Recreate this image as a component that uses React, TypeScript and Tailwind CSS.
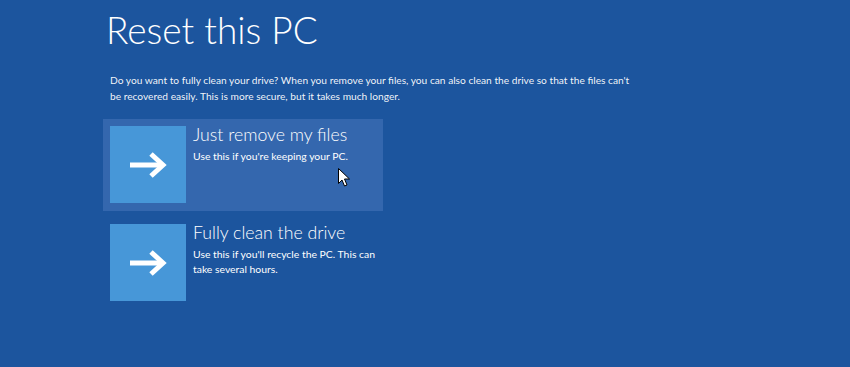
import React from 'react';

function ArrowTile() {
  return (
    <div className="w-[76px] h-[77px] bg-[#4797d8] flex items-center justify-center shrink-0">
      <svg width="40" height="28" viewBox="0 0 40 28" fill="none">
        <path d="M2 14H35" stroke="white" strokeWidth="5" />
        <path d="M23 3L35 14L23 25" stroke="white" strokeWidth="5" strokeLinejoin="miter" />
      </svg>
    </div>
  );
}

interface OptionProps {
  title: string;
  lines: string[];
  active?: boolean;
}

function Option({ title, lines, active }: OptionProps) {
  return (
    <div className={`w-[280px] h-[92px] p-[7px] flex gap-[7px] ${active ? 'bg-[#3467ae]' : ''}`}>
      <ArrowTile />
      <div className="flex flex-col text-white whitespace-nowrap">
        <div className="text-[17.7px] font-light leading-[22px] -mt-[2px]">{title}</div>
        <div className="text-[10.4px] leading-[15px] mt-[3px]">
          {lines.map((l) => (
            <div key={l}>{l}</div>
          ))}
        </div>
      </div>
    </div>
  );
}

export default function App() {
  return (
    <div className="w-[850px] h-[367px] bg-[#1c559e] overflow-hidden relative font-['Lato',sans-serif] text-white">
      <div className="pl-[103px] pt-[4px]">
        <h1 className="text-[37px] font-light leading-[52px] pl-[3px]">Reset this PC</h1>
        <p className="mt-[16px] pl-[7px] w-[534px] text-[10.2px] leading-[16px] text-white/95">
          Do you want to fully clean your drive? When you remove your files, you can also clean the drive so that the files can't be recovered easily. This is more secure, but it takes much longer.
        </p>
        <div className="mt-[15px] flex flex-col gap-[6px]">
          <Option active title="Just remove my files" lines={["Use this if you're keeping your PC."]} />
          <Option title="Fully clean the drive" lines={["Use this if you'll recycle the PC. This can", 'take several hours.']} />
        </div>
      </div>

      {/* mouse pointer */}
      <svg className="absolute left-[338px] top-[168px]" width="12" height="19" viewBox="0 0 12 19">
        <path d="M0.5 0.5V15.5L4 12L6.5 18L9 17L6.5 11H11.5Z" fill="white" stroke="black" strokeWidth="1" />
      </svg>
    </div>
  );
}
